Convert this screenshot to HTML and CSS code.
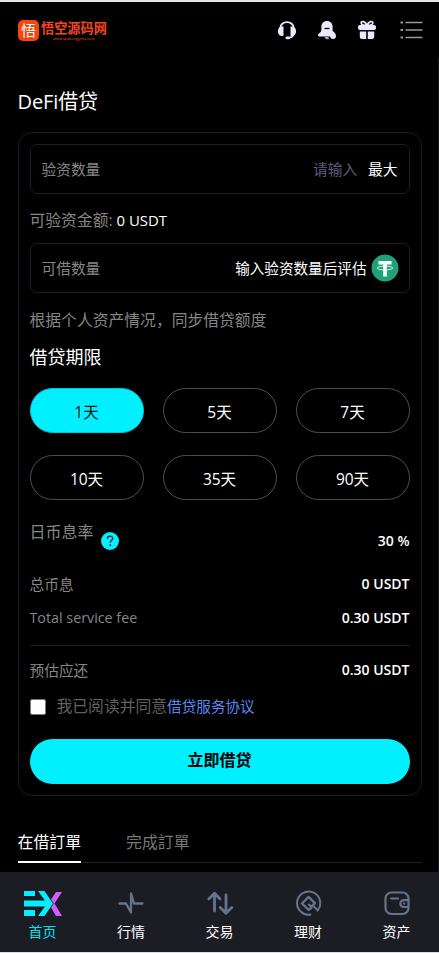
FILE: index.html
```html
<!DOCTYPE html>
<html lang="zh">
<head>
<meta charset="utf-8">
<title>DeFi借贷</title>
<link rel="stylesheet" href="styles.css">
</head>
<body>
<div class="app">
  <header class="header">
    <div class="brand">
      <span class="brand-mark">悟</span>
      <span class="brand-copy"><b>悟空源码网</b><small>www.wukongyma.com</small></span>
    </div>
    <div class="actions">
      <svg width="20" height="20" viewBox="0 0 20 20"><path d="M3.2 8.500C3.2 0 16.8 0 16.8 8.500M16.700 14c-.8 2.500-2.300 3.600-5.200 3.900" fill="none" stroke="#eaeaff" stroke-width="1.900"/><path d="M6.500 6.600v9.200c-3 .8-5.600-.8-5.600-4.600s2.600-5.400 5.600-4.600zM13.500 6.600v9.200c3 .8 5.600-.8 5.600-4.600s-2.600-5.400-5.600-4.600z" fill="#eaeaff"/><rect x="8.500" y="16.400" width="4.500" height="2.800" rx="1.400" fill="#eaeaff"/></svg>
      <svg width="20" height="20" viewBox="0 0 20 20"><path d="M10 1c3.500 0 5.600 2.500 5.600 5.800V11c2 1.200 3.400 3 3.400 5 0 2-1.200 3-3 3-2 0-2.600-1-2.800-2.500H2.600c-1.900 0-2-2-.7-3 2-1.300 2.500-2.500 2.500-4.500V6.800C4.400 3.500 6.500 1 10 1z" fill="#eaeaff"/><path d="M7.500 8.500h5" stroke="#000" stroke-width="1.300"/><path d="M7.500 17h4c0 1.100.5 1.900 1 2.200-2.500.5-4.500-.2-5-2.200z" fill="#aaaabd"/></svg>
      <svg width="20" height="20" viewBox="0 0 20 20"><path d="M10 5.500C8.500 1 4 .5 4.200 3c.1 1.600 3 2.500 5.800 2.500C11.500 1 16 .5 15.800 3c-.1 1.600-3 2.500-5.800 2.500" fill="none" stroke="#eaeaff" stroke-width="1.700"/><rect x="1" y="5" width="18" height="5" rx="2" fill="#eaeaff"/><path d="M2.800 11.500h6.400V19H5.300a2.500 2.500 0 0 1-2.500-2.500zM10.800 11.500h6.400v5a2.500 2.500 0 0 1-2.500 2.500h-3.900z" fill="#eaeaff"/></svg>
      <svg class="menu-icon" width="23" height="20" viewBox="0 0 23 20"><path d="M5.500 2.500h17M5.500 10h17M5.500 17.500h17" stroke="#999" stroke-width="1.500"/><path d="M.5 2.500H3M.5 10H3M.5 17.500H3" stroke="#999" stroke-width="2"/></svg>
    </div>
  </header>

  <main class="page">
    <h1>DeFi借贷</h1>
    <section class="card">
      <div class="field"><span class="muted">验资数量</span><span class="field-end"><span class="placeholder">请输入</span><span>最大</span></span></div>
      <p class="available"><span class="muted">可验资金额:</span> 0 USDT</p>
      <div class="field"><span class="muted">可借数量</span><span class="field-end coin">输入验资数量后评估
        <svg width="28" height="28" viewBox="0 0 28 28"><circle cx="14" cy="14" r="13.500" fill="#1fa27a"/><path d="M7.500 7h13v3.500h-4.700v12h-3.600v-12H7.500z" fill="#fff"/><ellipse cx="14" cy="14" rx="7.800" ry="1.900" fill="none" stroke="#fff" stroke-width=".8"/></svg></span></div>
      <p class="hint">根据个人资产情况，同步借贷额度</p>
      <h2>借贷期限</h2>
      <div class="terms">
        <button class="term selected">1天</button><button class="term">5天</button><button class="term">7天</button>
        <button class="term">10天</button><button class="term">35天</button><button class="term">90天</button>
      </div>
      <div class="row rate"><span class="rate-label"><span>日币息率</span><svg class="help" width="18" height="18" viewBox="0 0 18 18"><circle cx="9" cy="9" r="9" fill="#00f0ff"/><path d="M6.400 6.800C6.400 3.300 11.800 3.500 11.700 6.500 11.600 8.300 9.200 8.300 9.200 10.800" fill="none" stroke="#102328" stroke-width="1.300"/><circle cx="9.200" cy="13.200" r=".9" fill="#102328"/></svg></span><b>30 %</b></div>
      <div class="row interest"><span>总币息</span><b>0 USDT</b></div>
      <div class="row fee"><span class="latin">Total service fee</span><b>0.30 USDT</b></div>
      <div class="row total"><span>预估应还</span><b>0.30 USDT</b></div>
      <label class="agree"><input type="checkbox"><span>我已阅读并同意</span><a>借贷服务协议</a></label>
      <button class="submit">立即借贷</button>
    </section>
    <div class="tabs"><span class="tab current">在借訂單</span><span class="tab">完成訂單</span></div>
  </main>

  <nav class="nav">
    <div class="nav-item active"><svg width="40" height="28" viewBox="0 0 40 28"><path d="M1 2h11v5H1zM1 21h11v6H1zM1 11.500h21L15 2h6.500l8.500 12.500-8.500 12.500H15l7-9.500H1z" fill="#00f0ff"/><path d="M33 3h6l-7.500 11.500L39 27h-6l-5-8.500 2.800-4L28 10.500z" fill="#d35cff"/></svg><span>首页</span></div>
    <div class="nav-item"><svg width="28" height="28" viewBox="0 0 28 28"><path d="M2.500 14.500h6.500l5 9V4.500l3 10h8.500" fill="none" stroke="#64748b" stroke-width="2.300" stroke-linejoin="round" stroke-linecap="round"/></svg><span>行情</span></div>
    <div class="nav-item"><svg width="28" height="28" viewBox="0 0 28 28"><path d="M8.500 22V4.500M2.800 10l5.700-5.700L14 10M20 6v18M14.200 18.500l5.800 5.700 5.800-5.700" fill="none" stroke="#64748b" stroke-width="2.800" stroke-linecap="round" stroke-linejoin="round"/></svg><span>交易</span></div>
    <div class="nav-item"><svg width="28" height="28" viewBox="0 0 28 28"><path d="M16.500 25.600A11.600 11.600 0 1 1 23.700 21.400L19.500 17" fill="none" stroke="#64748b" stroke-width="2" stroke-linecap="round"/><path d="M18 18.500l-3.300 2.300L8 14.500l6.600-6.600 6.300 6.300-3.600 3.600L14.400 15" fill="none" stroke="#64748b" stroke-width="2.400" stroke-linejoin="round"/></svg><span>理财</span></div>
    <div class="nav-item"><svg width="28" height="28" viewBox="0 0 28 28"><rect x="2.500" y="3.500" width="23" height="21.500" rx="6" fill="none" stroke="#64748b" stroke-width="2.200"/><path d="M8 9.500h7M25 11.200h-4.300a3.400 3.400 0 0 0 0 6.800H25" fill="none" stroke="#64748b" stroke-width="2.200" stroke-linecap="round"/><circle cx="21" cy="14.600" r="1.200" fill="#64748b"/></svg><span>资产</span></div>
  </nav>
</div>
</body>
</html>
```
FILE: styles.css
```css
* { box-sizing: border-box; }
html, body { margin: 0; height: 100%; overflow: hidden; background: #000; }
body { font-family: "Open Sans", "Noto Sans CJK SC", sans-serif; font-size: 15px; color: #fff; }
h1, h2, p { margin: 0; font-weight: 400; }
button { font: inherit; padding: 0; cursor: pointer; }
svg { display: block; flex: none; }
b { font-weight: 600; }

.app { height: 953px; display: flex; flex-direction: column; border-top: 2px solid #e9e2e8; border-bottom: 1px solid #dedee2; }
.header { height: 56px; flex: none; display: flex; justify-content: space-between; align-items: center; padding: 0 16px 0 18px; }
.brand { display: flex; align-items: center; gap: 2px; color: #f4471f; }
.brand-mark { width: 21px; height: 21px; border-radius: 5px; background: #f7430e; color: #fff; font-size: 15px; line-height: 20px; text-align: center; }
.brand-copy { display: flex; flex-direction: column; align-items: center; margin-top: 2px; }
.brand-copy b { font-size: 13.200px; line-height: 15px; font-weight: 700; }
.brand-copy small { font-size: 4px; line-height: 6px; }
.actions { display: flex; align-items: center; gap: 20px; margin-top: -1px; }
.menu-icon { margin-left: 3px; }

.page { flex: 1; min-height: 0; padding: 28px 17.500px 0; border-right: 1px solid #18181c; }
h1 { font-size: 20px; line-height: 32px; letter-spacing: -.1px; }
.card { width: 404px; height: 664px; margin-top: 14px; padding: 11px 11px 0; border: 1px solid #1a1a23; border-radius: 14px; }
.muted, .row span { color: #868686; }
.field { height: 50px; padding: 0 11px; display: flex; align-items: center; justify-content: space-between; border: 1px solid #1d1d27; border-radius: 7px; font-size: 14.700px; line-height: 22px; padding-bottom: 1px; }
.field-end { display: flex; gap: 11px; align-items: center; }
.coin { gap: 4px; margin-right: -1px; font-size: 14.600px; }
.placeholder { color: #5c5d7d; }
.available { height: 49px; line-height: 53px; font-size: 14.900px; }
.available .muted { font-size: 15.800px; }
.hint { line-height: 26px; margin-top: 14px; font-size: 15.800px; color: #868686; }
h2 { margin-top: 8px; font-size: 18px; line-height: 32px; }
.terms { display: grid; grid-template-columns: repeat(3, 1fr); gap: 22.500px 19px; margin-top: 14.500px; }
.term { height: 45px; padding-top: 2px; border: 1px solid #4e4b5b; border-radius: 23px; background: none; color: #fff; font-size: 15.500px; }
.selected { background: #00f0ff; border-color: #00c7d4; color: #111; }

.row { display: flex; align-items: center; justify-content: space-between; line-height: 24px; }
.rate { margin-top: 20px; height: 42px; }
.rate-label { display: flex; gap: 7px; font-size: 16px; height: 42px; }
.rate-label .help { margin-top: 12px; }
.interest { margin-top: 10px; height: 24px; font-size: 14.700px; }
.fee { height: 36px; align-items: flex-start; margin-top: 10px; }
.latin { font-size: 14.300px; font-weight: 500; }
.row b { font-size: 14px; }
.total { height: 49px; border-top: 1px solid #1b1c26; margin-top: 2.500px; font-size: 14.700px; }
.agree { display: flex; align-items: center; height: 24px; }
.agree input { width: 16px; height: 16px; margin: 2px 11px 0 0; border-radius: 3px; }
.agree span { font-size: 15.800px; color: #606060; }
.agree a { font-size: 14.600px; color: #5b87ef; }
.submit { display: block; width: 100%; height: 45px; margin-top: 21px; border: 0; border-radius: 23px; background: #00f0ff; color: #000; font-size: 16px; line-height: 43px; padding-bottom: 2px; font-weight: 700; }
.tabs { display: flex; gap: 45px; height: 41px; margin-top: 26px; width: 404px; border-bottom: 1px solid #20202d; }
.tab { height: 41px; line-height: 41px; font-size: 15.900px; color: #777; }
.current { color: #fff; border-bottom: 2px solid #fff; }

.nav { height: 80px; flex: none; display: flex; justify-content: center; background: #1b1c24; width: 439px; }
.nav-item { flex: 0 0 88.500px; display: flex; flex-direction: column; align-items: center; padding-top: 17px; font-size: 14px; line-height: 22px; }
.nav-item span { margin-top: 4px; }
.active { color: #00e2f2; }
```
